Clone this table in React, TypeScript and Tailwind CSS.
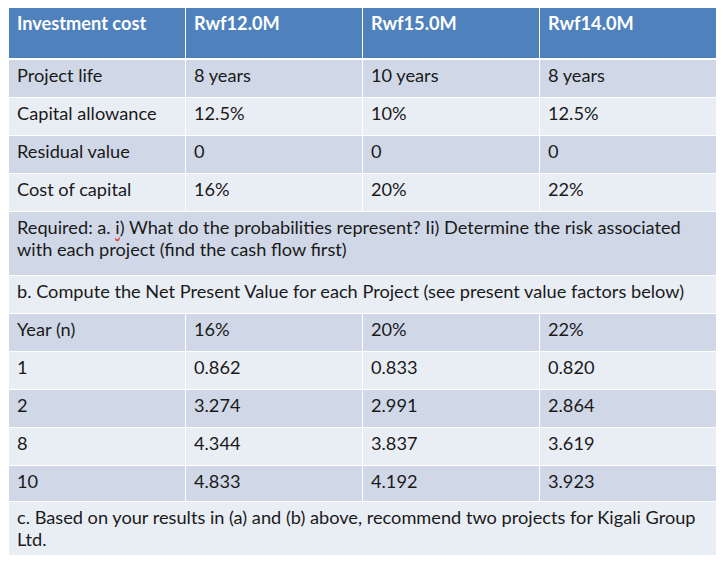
import React from "react"

const dark = "bg-[#d0d8e8]"
const light = "bg-[#e9edf4]"

type Row = { cells: string[]; tone: "dark" | "light"; h: string }

const topRows: Row[] = [
  { cells: ["Project life", "8 years", "10 years", "8 years"], tone: "dark", h: "h-[37px]" },
  { cells: ["Capital allowance", "12.5%", "10%", "12.5%"], tone: "light", h: "h-[37px]" },
  { cells: ["Residual value", "0", "0", "0"], tone: "dark", h: "h-[37px]" },
  { cells: ["Cost of capital", "16%", "20%", "22%"], tone: "light", h: "h-[37px]" },
]

const factorRows: Row[] = [
  { cells: ["Year (n)", "16%", "20%", "22%"], tone: "dark", h: "h-[37px]" },
  { cells: ["1", "0.862", "0.833", "0.820"], tone: "light", h: "h-[37px]" },
  { cells: ["2", "3.274", "2.991", "2.864"], tone: "dark", h: "h-[37px]" },
  { cells: ["8", "4.344", "3.837", "3.619"], tone: "light", h: "h-[37px]" },
  { cells: ["10", "4.833", "4.192", "3.923"], tone: "dark", h: "h-[35px]" },
]

function DataRow({ row }: { row: Row }) {
  const bg = row.tone === "dark" ? dark : light
  return (
    <div className={`grid grid-cols-[176px_176px_176px_176px] gap-x-px ${row.h}`}>
      {row.cells.map((c, i) => (
        <div key={i} className={`${bg} px-2 pt-[4px]`}>
          {c}
        </div>
      ))}
    </div>
  )
}

export default function App() {
  return (
    <div className="w-[723px] h-[562px] bg-white pt-2 pl-[9px] text-[18.2px] leading-[22px] text-[#1a1a1a] font-['Lato','Open_Sans',sans-serif]">
      <div className="w-[707px] flex flex-col gap-y-px">
        {/* header */}
        <div className="grid grid-cols-[176px_176px_176px_176px] gap-x-px h-[50px] mb-px">
          {["Investment cost", "Rwf12.0M", "Rwf15.0M", "Rwf14.0M"].map((c) => (
            <div key={c} className="bg-[#4f81bd] px-2 pt-[4px] font-bold text-white">
              {c}
            </div>
          ))}
        </div>

        {topRows.map((r) => (
          <DataRow key={r.cells[0]} row={r} />
        ))}

        <div className={`${dark} h-[63px] px-2 pt-[4px]`}>
          Required: a. <span className="underline decoration-wavy decoration-[#e04040]">i</span>) What do the
          probabilities represent? Ii) Determine the risk associated with each project (find the cash flow first)
        </div>

        <div className={`${light} h-[37px] px-2 pt-[4px]`}>
          b. Compute the Net Present Value for each Project (see present value factors below)
        </div>

        {factorRows.map((r) => (
          <DataRow key={r.cells[0]} row={r} />
        ))}

        <div className={`${light} h-[53px] px-2 pt-[4px]`}>
          c. Based on your results in (a) and (b) above, recommend two projects for Kigali Group Ltd.
        </div>
      </div>
    </div>
  )
}
